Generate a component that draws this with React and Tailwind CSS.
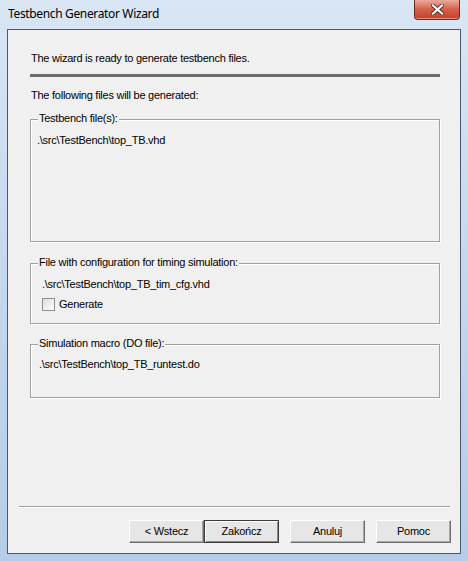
import React from "react"

const GroupBox = ({ title, className, children }) => {
  return (
    <div className={`relative mx-[22px] w-[410px] border border-[#a0a0a0] shadow-[inset_1px_1px_0_#ffffff,1px_1px_0_#ffffff] ${className}`}>
      <span className="absolute left-[7px] top-[-8px] bg-[#f0f0f0] px-[1px] leading-[13px]">{title}</span>
      {children}
    </div>
  )
}

const Btn = ({ children, isDefault }) => {
  return (
    <button
      className={`h-[23px] w-[75px] bg-[#e6e6e6] leading-[13px] text-black ${
        isDefault
          ? "border border-[#3a3a3a] shadow-[inset_1px_1px_0_#ffffff,inset_-1px_-1px_0_#8a8a8a]"
          : "border border-t-[#ffffff] border-l-[#ffffff] border-b-[#6e6e6e] border-r-[#6e6e6e] shadow-[inset_-1px_-1px_0_#a8a8a8]"
      }`}
    >
      {children}
    </button>
  )
}

export default function App() {
  return (
    <div className="relative h-[561px] w-[468px] overflow-hidden bg-gradient-to-b from-[#d9e6f4] via-[#c3d7ed] to-[#b5cde8] font-['Liberation_Sans',Arial,sans-serif] text-[11px] tracking-[-0.25px] text-black">
      {/* title bar */}
      <div className="flex h-[29px] items-center pl-[8px] pb-[2px] font-['Noto_Sans',sans-serif] text-[12px] tracking-[-0.35px] text-black">
        Testbench Generator Wizard
      </div>
      <div className="absolute right-[8px] top-0 flex h-[20px] w-[46px] items-center justify-center rounded-b-[4px] border border-t-0 border-[#6b2a22] bg-gradient-to-b from-[#e9a99b] via-[#d2604c] to-[#c2402b] shadow-[inset_0_-1px_0_#e5917d]">
        <svg width="13" height="11" viewBox="0 0 13 11">
          <path d="M2 1.5 L11 9.5 M11 1.5 L2 9.5" stroke="#5b2a22" strokeWidth="4" strokeLinecap="square" />
          <path d="M2 1.5 L11 9.5 M11 1.5 L2 9.5" stroke="#ffffff" strokeWidth="2.2" strokeLinecap="square" />
        </svg>
      </div>

      {/* client area */}
      <div className="mx-[7px] flex h-[525px] flex-col border border-[#4a5a6c] bg-[#f0f0f0]">
        <div className="pl-[23px] pt-[22px] leading-[13px]">The wizard is ready to generate testbench files.</div>
        <div className="ml-[22px] mt-[9px] h-[3px] w-[410px] bg-[#6d6d6d]" />
        <div className="pl-[23px] pt-[12px] leading-[13px]">The following files will be generated:</div>

        <GroupBox title="Testbench file(s):" className="mt-[17px] h-[123px] pl-[6px] pt-[14px]">
          <div className="leading-[13px]">.\src\TestBench\top_TB.vhd</div>
        </GroupBox>

        <GroupBox title="File with configuration for timing simulation:" className="mt-[21px] h-[61px] pl-[11px] pt-[14px]">
          <div className="leading-[13px]">.\src\TestBench\top_TB_tim_cfg.vhd</div>
          <label className="mt-[7px] flex items-center gap-[4px] leading-[13px]">
            <span className="h-[13px] w-[13px] border border-[#8e8f8f] bg-gradient-to-br from-[#dcdcdc] to-[#ffffff]" />
            Generate
          </label>
        </GroupBox>

        <GroupBox title="Simulation macro (DO file):" className="mt-[20px] h-[54px] pl-[8px] pt-[13px]">
          <div className="leading-[13px]">.\src\TestBench\top_TB_runtest.do</div>
        </GroupBox>

        <div className="ml-[11px] mt-[108px] h-[2px] w-[431px] border-t border-[#a0a0a0] border-b border-b-white" />

        <div className="mt-[12px] flex pl-[121px]">
          <Btn>&lt; Wstecz</Btn>
          <Btn isDefault>Zakończ</Btn>
          <div className="ml-[11px]">
            <Btn>Anuluj</Btn>
          </div>
          <div className="ml-[11px]">
            <Btn>Pomoc</Btn>
          </div>
        </div>
      </div>
    </div>
  )
}
